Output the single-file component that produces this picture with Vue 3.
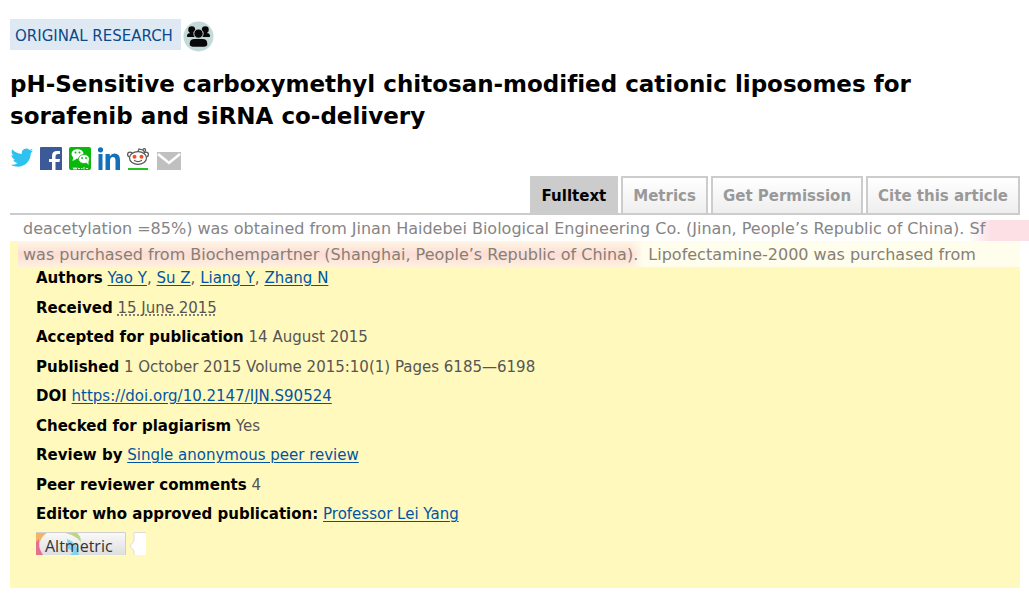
<script setup>
const tabs = ['Fulltext', 'Metrics', 'Get Permission', 'Cite this article']
const authors = ['Yao Y', 'Su Z', 'Liang Y', 'Zhang N']
</script>

<template>
  <main class="page">
    <div class="kind">
      <a class="label" href="#">ORIGINAL RESEARCH</a>
      <svg class="people" viewBox="0 0 32 32" aria-hidden="true">
        <circle cx="16" cy="16" r="15.5" fill="#c3dad9" />
        <g fill="#080808">
          <circle cx="9" cy="9" r="3.6" /><circle cx="23" cy="9" r="3.6" />
          <path d="M4 16q0-3.500 4-3.500h4v4H5zM28 16q0-3.500-4-3.500h-4v4h7z" />
          <path d="M7 25v-2q0-4.500 5-4.500h8q5 0 5 4.500v2q-1 1.500-3 1.500H10q-2 0-3-1.500z" />
          <circle cx="16" cy="13" r="4.800" stroke="#c3dad9" stroke-width="1" />
        </g>
      </svg>
    </div>

    <h1>pH-Sensitive carboxymethyl chitosan-modified cationic liposomes for sorafenib and siRNA co-delivery</h1>

    <nav class="share" aria-label="Share">
      <a href="#" aria-label="Twitter">
        <svg viewBox="0 0 24 24"><path fill="#2fc2ef" d="M23 4.500l-2.300.600 1.800-2.300-2.900 1.100A4.600 4.600 0 0 0 11.800 8C8 7.800 4.600 6 2.300 3.200 1 5.500 1.700 8.200 3.700 9.500L1.600 8.900c0 2.300 1.600 4.200 3.700 4.700l-2 .1c.6 1.800 2.300 3.100 4.300 3.200A9.500 9.500 0 0 1 .8 18.800C11 24.500 20.900 17 20.800 7.200z" /></svg>
      </a>
      <a href="#" aria-label="Facebook">
        <svg viewBox="0 0 24 24"><path fill="#3c5a98" d="M2 1h20q1 0 1 1v22H1V2q0-1 1-1z" /><path fill="#fff" d="M13 24v-8h-3v-3h3v-3q0-5 5-5h3v3h-2q-2.500 0-2.500 2.500V13H21l-.5 3h-4v8z" /></svg>
      </a>
      <a href="#" aria-label="WeChat">
        <svg viewBox="0 0 24 24">
          <rect x="1" y="1" width="22" height="23" rx="2" fill="#09b80b" />
          <ellipse cx="9.500" cy="8" rx="6" ry="4.800" fill="#fff" /><path d="M5.500 10l-1 5 4-2z" fill="#fff" />
          <ellipse cx="16" cy="13" rx="5.500" ry="4.500" fill="#fff" stroke="#09b80b" stroke-width=".8" /><path d="M18 16l2.500 3v-4z" fill="#fff" />
          <g fill="#09b80b"><circle cx="7.500" cy="6.500" r="1" /><circle cx="11.500" cy="6.500" r="1" /><circle cx="14" cy="12" r=".9" /><circle cx="18" cy="12" r=".9" /></g>
          <path d="M5 21.500l1 2 1-2 1 2 1-2M10 22.500h2M13 22.500h1.500M16 21v2.500M18 22.500h2" fill="none" stroke="#d8f5d8" />
        </svg>
      </a>
      <a href="#" aria-label="LinkedIn">
        <svg viewBox="0 0 24 24"><g fill="#1470b8"><circle cx="3.500" cy="3.800" r="2.600" /><path d="M1.500 8h4v16h-4zM8.500 8h4.300v2.200Q14.500 7.500 17.500 7.500q5.500 0 5.500 6.500v10h-4.500v-9.500q0-3.500-2.500-3.500-3 0-3 4v9H8.500z" /></g></svg>
      </a>
      <a href="#" aria-label="Reddit">
        <svg viewBox="0 0 24 24">
          <g fill="#fff" stroke="#555" stroke-width="1.200"><circle cx="4" cy="8.500" r="2.400" /><circle cx="20" cy="8.500" r="2.400" /><ellipse cx="12" cy="12" rx="8.500" ry="6.300" /><path d="M12 5.500l1-2.500 4 1" fill="none" /><circle cx="18.300" cy="4" r="1.300" /></g>
          <circle cx="8.500" cy="10.800" r="2" fill="#f4511e" /><circle cx="15.500" cy="10.800" r="2" fill="#f4511e" />
          <path d="M8 14.500q4 2.500 8 0" fill="none" stroke="#444" />
          <path d="M2 22h20v2H2z" fill="#22c322" />
        </svg>
      </a>
      <a href="#" aria-label="Email">
        <svg viewBox="0 0 24 24"><path fill="#c0c0c0" d="M0 6h24v18H0z" /><path d="M1 8l11 9 11-9" fill="none" stroke="#fff" stroke-width="2.500" /></svg>
      </a>
    </nav>

    <nav class="tabs" aria-label="Article sections">
      <a v-for="(tab, i) in tabs" :key="tab" href="#" :class="{ active: i === 0 }">{{ tab }}</a>
    </nav>

    <article>
      <p class="excerpt">
        <span class="line first">deacetylation =85%) was obtained from Jinan Haidebei Biological Engineering Co. (Jinan, People’s Republic of China).&nbsp;<mark class="end">Sf</mark></span>
        <span class="line second"><mark>was purchased from Biochempartner (Shanghai, People’s Republic of China).</mark> Lipofectamine-2000 was purchased from</span>
      </p>
      <section class="details">
        <div class="rows">
          <p><b>Authors</b> <template v-for="(name, i) in authors" :key="name"><a href="#">{{ name }}</a><template v-if="i < authors.length - 1">, </template></template></p>
          <p><b>Received</b> <span class="date">15 June 2015</span></p>
          <p><b>Accepted for publication</b> 14 August 2015</p>
          <p><b>Published</b> 1 October 2015 Volume 2015:10(1) Pages 6185—6198</p>
          <p><b>DOI</b> <a href="#">https://doi.org/10.2147/IJN.S90524</a></p>
          <p><b>Checked for plagiarism</b> Yes</p>
          <p><b>Review by</b> <a href="#">Single anonymous peer review</a></p>
          <p><b>Peer reviewer comments</b> 4</p>
          <p><b>Editor who approved publication:</b> <a href="#">Professor Lei Yang</a></p>
        </div>
        <a class="altmetric" href="#">
          <svg viewBox="0 0 110 23" aria-hidden="true">
            <defs><linearGradient id="badge" x2="0" y2="1"><stop stop-color="#fafafa" /><stop offset="1" stop-color="#dedede" /></linearGradient></defs>
            <path fill="url(#badge)" d="M0 0h90v23H0z" />
            <path fill="#f5b264" d="M0 0h12Q4 5 3 14L0 15z" />
            <path fill="#e8708f" d="M0 10l3-3q-1 9 4 16H0z" />
            <path fill="#bcd685" d="M22 0h18q5 4 5 10-7-9-23-10z" />
            <path fill="#82d3f2" d="M31 7q10 3 12 16h-9l4-4-6-2z" />
            <path fill="none" stroke="#cfcfcf" d="M0 .5h89.500V23" />
            <path fill="#fff" stroke="#ddd" d="M110 .5H98V9l-4 5 4 5v4h12" />
            <path fill="#fff" d="M99 1h11v22H99z" />
          </svg>
          <span>Altmetric</span>
        </a>
      </section>
    </article>
  </main>
</template>

<style>
body { margin: 0; background: #fff; }
</style>

<style scoped>
.page { padding: 19px 9px 24px 10px; font-family: Verdana, "DejaVu Sans", sans-serif; font-size: 15px; font-variant-ligatures: none; color: #555; }
.kind { display: flex; align-items: center; gap: 2px; height: 34px; }
.label { padding: 4px 8px 0 5px; line-height: 27px; margin-bottom: 3px; background: #dfe9f3; color: #0a4a8c; text-decoration: none; }
.people { width: 31px; height: 31px; }
h1 { margin: 15px 0 13px; font-size: 23px; line-height: 32px; color: #000; }
.share { display: flex; gap: 5px; padding-top: 1px; }
.share a, .share svg { display: block; width: 24px; height: 24px; }
.share a:last-child { margin-left: 2px; }
.tabs { display: flex; justify-content: flex-end; gap: 3px; margin-top: 6px; border-bottom: 2px solid #ccc; }
.tabs a { padding: 1px 10px 0; border: 2px solid #ccc; border-bottom: 0; background: linear-gradient(#fff, #eee); color: #999; font-weight: bold; line-height: 34px; text-decoration: none; white-space: nowrap; }
.tabs .active { background: #ccc; color: #000; }
article { position: relative; padding-top: 26px; }
.excerpt { position: absolute; top: 0; left: 8px; right: -9px; margin: 0; font-size: 16px; line-height: 26px; color: #858585; white-space: nowrap; overflow: hidden; }
.line { display: block; padding-top: 1px; padding-left: 5px; line-height: 25px; }
.first { display: flex; }
.second { margin-right: 9px; background: #fffdec; color: #877f75; }
mark { background: none; color: inherit; margin-left: -5px; padding: 4px 5px; background: linear-gradient(90deg, transparent 98%, #fffdec), linear-gradient(#fff5e5, #fcddd5 50%, #fff2df); }
.end { flex: 1; margin: 4px 0 0; padding: 0; line-height: 17px; background: linear-gradient(90deg, #fff, #fce0e5 22px); }
.details { padding: 22px 26px 33px; background: #fff9bd; }
.rows { display: grid; grid-auto-rows: 1fr; min-height: 266px; }
.rows p { margin: 0; padding-top: 1px; line-height: 28px; }
b { color: #000; }
.rows a { color: #0054a6; text-underline-offset: 2px; }
.date { text-decoration: underline dotted; text-underline-offset: 2px; }
.altmetric { display: grid; width: 110px; margin-top: 3px; color: #333; text-decoration: none; }
.altmetric svg, .altmetric span { grid-area: 1 / 1; }
.altmetric svg { width: 110px; height: 23px; }
.altmetric span { padding-left: 9px; font-family: "Open Sans", sans-serif; font-size: 16px; line-height: 28px; height: 23px; }
</style>
